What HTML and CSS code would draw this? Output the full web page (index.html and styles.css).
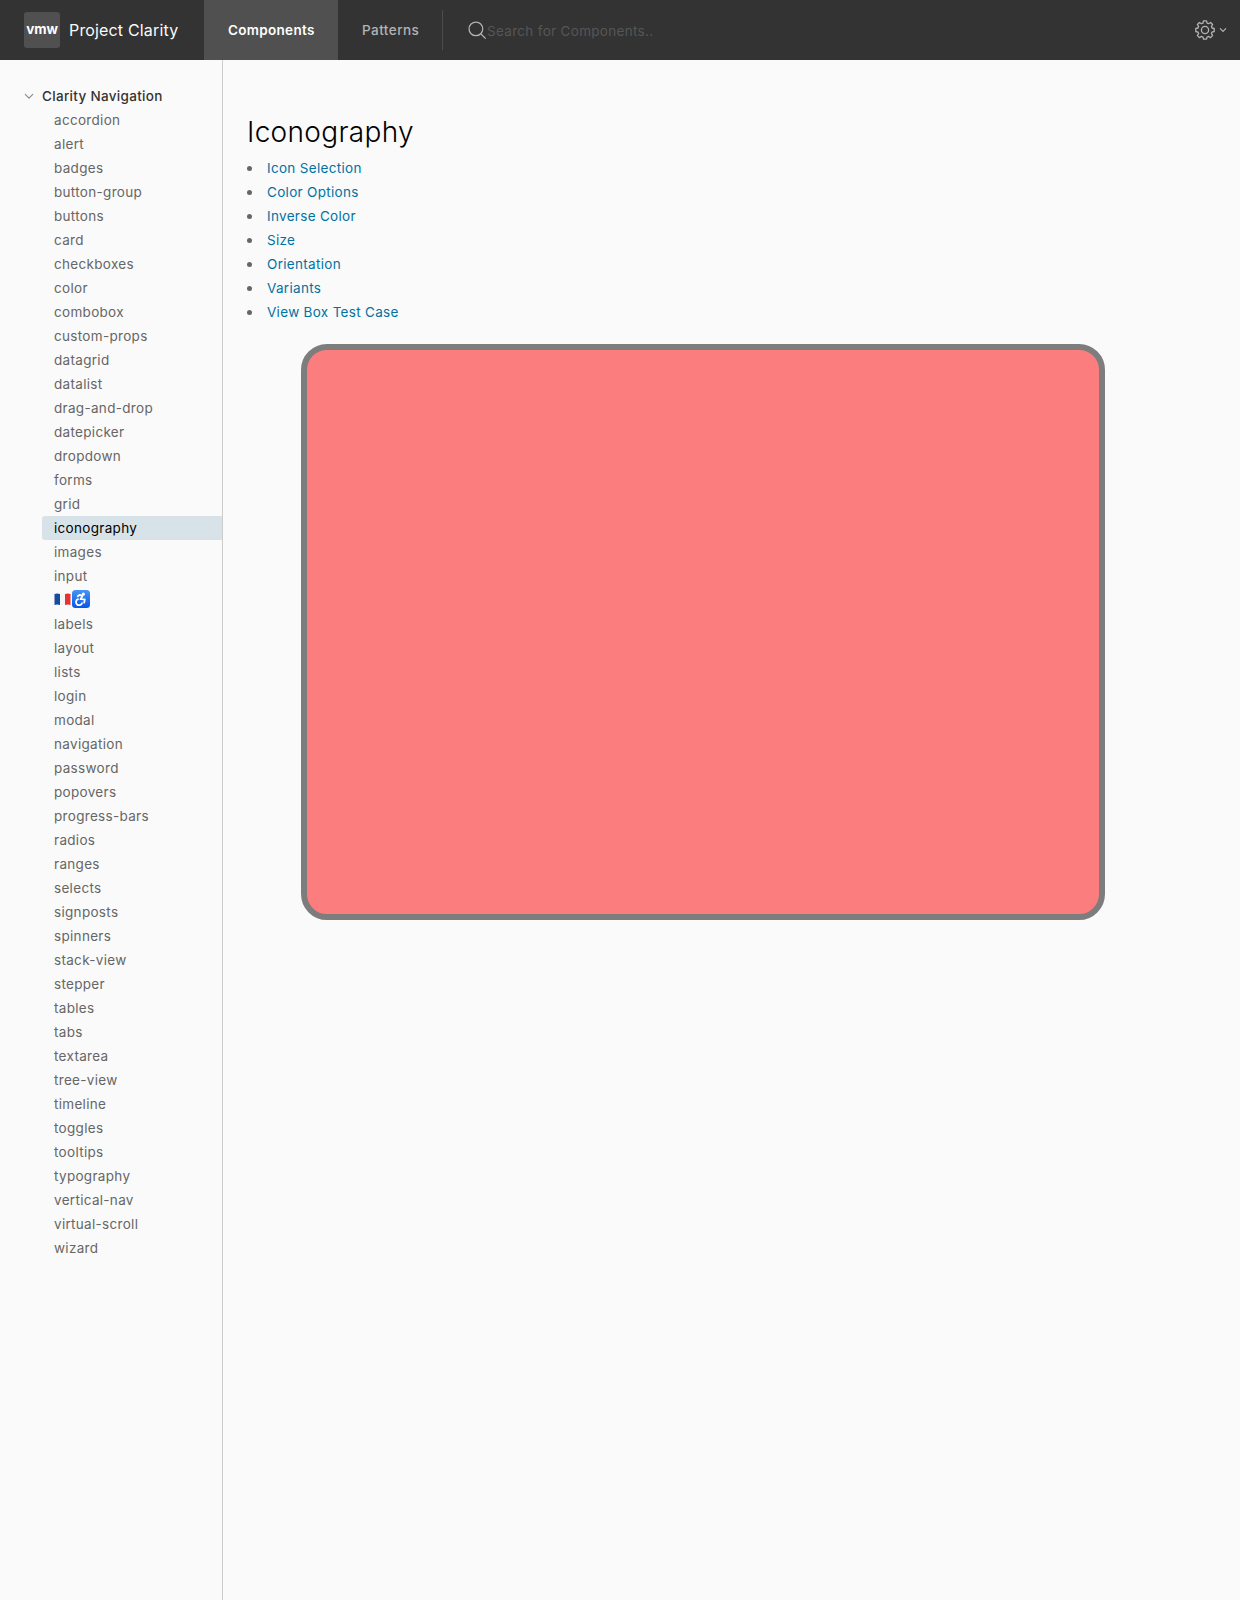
FILE: index.html
```
<!DOCTYPE html>
<html lang="en">
<head>
<meta charset="utf-8">
<title>Project Clarity</title>
<link rel="stylesheet" href="styles.css">
</head>
<body>
<header class="header">
  <div class="branding"><span class="logo">vmw</span><span class="title">Project Clarity</span></div>
  <nav class="header-nav">
    <a class="header-link active"><span>Components</span></a>
    <a class="header-link patterns"><span>Patterns</span></a>
  </nav>
  <div class="search">
    <svg class="search-icon" viewBox="0 0 20 20"><circle cx="8.3" cy="8.3" r="7.2"/><path d="M13.4 13.4l5.2 5.2"/></svg>
    <span class="placeholder">Search for Components..</span>
  </div>
  <div class="settings">
    <svg class="gear" viewBox="0 0 20 20"><circle cx="10" cy="10" r="3.6"/><path d="M8.5.8h3l.6 2.3 1.4.6 2.1-1.2 2 2-1.2 2.1.6 1.4 2.2.5v3l-2.2.6-.6 1.4 1.2 2.1-2 2-2.1-1.2-1.4.6-.6 2.2h-3l-.5-2.2-1.5-.6-2.1 1.2-2-2 1.2-2.1-.6-1.4-2.2-.6v-3L3 8l.6-1.4-1.2-2.1 2-2 2.1 1.2L8 3.1z"/></svg>
    <svg class="caret" viewBox="0 0 8 6"><path d="M1 1.3l3 3 3-3"/></svg>
  </div>
</header>
<div class="layout">
  <aside class="sidebar">
    <div class="group"><svg class="toggle" viewBox="0 0 10 7"><path d="M1 1.2l4 4 4-4"/></svg><span class="group-title">Clarity Navigation</span></div>
    <nav class="nav-list">
      <a>accordion</a><a>alert</a><a>badges</a><a>button-group</a><a>buttons</a><a>card</a><a>checkboxes</a><a>color</a><a>combobox</a><a>custom-props</a><a>datagrid</a><a>datalist</a><a>drag-and-drop</a><a>datepicker</a><a>dropdown</a><a>forms</a><a>grid</a><a class="current">iconography</a><a>images</a><a>input</a>
      <a class="emoji" aria-label="French accessibility">
        <svg class="flag" viewBox="0 0 17 13"><path fill="#174b9c" d="M.5 1Q3 0 6 1v11Q3 11 .5 12z"/><path fill="#f5f5f5" d="M6 1q3 1 5 0v11q-2 1-5 0z"/><path fill="#e3342f" d="M11 1q3-1 5.500 0v11q-2.500-1-5.500 0z"/></svg>
        <svg class="access" viewBox="0 0 18 18"><defs><linearGradient id="blue" x2="0" y2="1"><stop stop-color="#4596f5"/><stop offset="1" stop-color="#0756e6"/></linearGradient></defs><rect width="18" height="18" rx="3.500" fill="url(#blue)"/><circle cx="11.300" cy="4.200" r="1.600" fill="#fff"/><g fill="none" stroke="#fff" stroke-width="1.800" stroke-linejoin="round" stroke-linecap="round"><path d="M5.700 6.300l2-1.500 2.700 1.500-1.900 2.900 4.300.1-.6 3.400"/><path d="M6 9.200a3.100 3.100 0 1 0 4 4"/></g></svg>
      </a>
      <a>labels</a><a>layout</a><a>lists</a><a>login</a><a>modal</a><a>navigation</a><a>password</a><a>popovers</a><a>progress-bars</a><a>radios</a><a>ranges</a><a>selects</a><a>signposts</a><a>spinners</a><a>stack-view</a><a>stepper</a><a>tables</a><a>tabs</a><a>textarea</a><a>tree-view</a><a>timeline</a><a>toggles</a><a>tooltips</a><a>typography</a><a>vertical-nav</a><a>virtual-scroll</a><a>wizard</a>
    </nav>
  </aside>
  <main class="content">
    <h1>Iconography</h1>
    <ul class="links">
      <li><a>Icon Selection</a></li><li><a>Color Options</a></li><li><a>Inverse Color</a></li><li><a>Size</a></li><li><a>Orientation</a></li><li><a>Variants</a></li><li><a>View Box Test Case</a></li>
    </ul>
    <div class="panel"></div>
  </main>
</div>
</body>
</html>
```
FILE: styles.css
```
* { box-sizing: border-box; }
body { margin: 0; height: 1600px; display: flex; flex-direction: column; background: #fafafa; color: #666; font: 400 13.5px/24px Inter, sans-serif; letter-spacing: .31px; }
svg { display: block; flex: none; fill: none; }
.header { height: 60px; flex: none; display: flex; background: #333; color: #fafafa; }
.branding { width: 204px; padding-left: 24px; display: flex; align-items: center; gap: 9px; }
.logo { width: 36px; height: 36px; border-radius: 3px; background: #505050; color: #fff; font: 700 13.5px/35px Inter, sans-serif; text-align: center; letter-spacing: -.1px; }
.title { font-size: 16px; letter-spacing: .16px; line-height: 22px; padding-bottom: 1px; white-space: nowrap; }
.header-nav { display: flex; }
.header-link { width: 134px; padding-left: 24px; line-height: 60px; font-weight: 500; color: #b3b3b3; }
.header-link.active { background: #505050; color: #fff; font-weight: 600; }
.header-link.patterns { width: 104px; letter-spacing: .45px; }
.search { display: flex; align-items: center; padding-left: 25px; margin: 10px 0; border-left: 1px solid #4d4d4d; }
.search-icon { width: 19px; height: 19px; stroke: #b3b3b3; stroke-width: 1.300; }
.placeholder { color: #565656; padding-top: 2px; }
.settings { display: flex; align-items: center; margin-left: auto; padding-right: 13px; gap: 4px; stroke: #b3b3b3; }
.gear { width: 20px; height: 20px; stroke-width: 1.300; stroke-linejoin: round; }
.caret { width: 8px; height: 6px; stroke-width: 1.200; }
.layout { flex: 1; display: flex; }
.sidebar { width: 223px; flex: none; padding-top: 24px; border-right: 1px solid #ccc; }
.group { display: flex; align-items: center; gap: 8px; padding-left: 24px; color: #333; font-weight: 500; }
.toggle { width: 10px; height: 7px; stroke: #8c8c8c; stroke-width: 1.200; }
.nav-list { margin-left: 42px; }
.nav-list a { display: block; height: 24px; padding-left: 12px; }
.nav-list .current { background: #d8e3e9; color: #000; border-radius: 3px 0 0 3px; }
.nav-list .emoji { display: flex; align-items: center; gap: 1px; padding-bottom: 2px; }
.flag { width: 17px; height: 13px; }
.access { width: 18px; height: 18px; }
.content { flex: 1; padding: 52px 24px 0; }
h1 { margin: 0; color: #000; font: 300 28px/40px Inter, sans-serif; letter-spacing: .31px; }
.links { list-style: none; margin: 4px 0 0; padding: 0; }
.links li { display: flex; align-items: center; gap: 15px; }
.links li::before { content: ""; width: 5px; height: 5px; border-radius: 50%; background: #666; }
.links a { color: #0072a3; }
.panel { width: 804px; height: 576px; margin: 20px 0 0 54px; border: 6px solid #7d7d7d; border-radius: 26px; background: #fc7d7d; }
```
